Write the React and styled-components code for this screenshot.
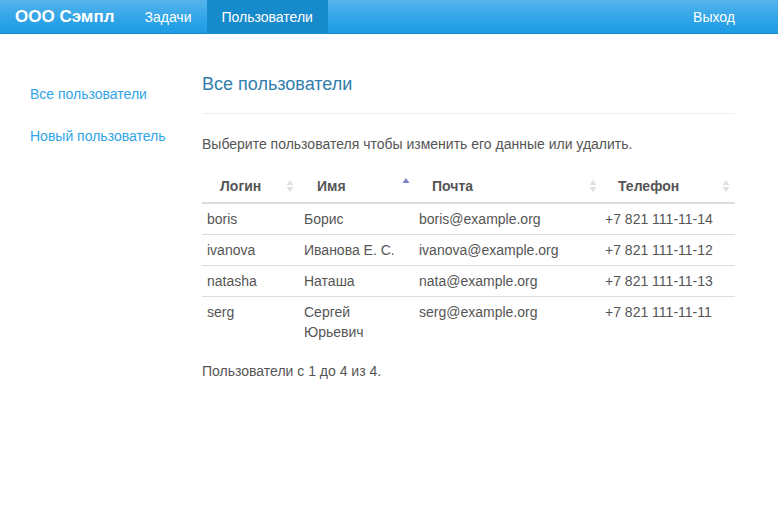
import React from "react";
import styled, { createGlobalStyle } from "styled-components";

const Global = createGlobalStyle`
  html, body { margin: 0; padding: 0; background: #fff; }
  body {
    font-family: "Liberation Sans", Arial, sans-serif;
    font-size: 14px;
    line-height: 20px;
    color: #555555;
  }
  * { box-sizing: border-box; }
`;

const Navbar = styled.nav`
  height: 34px;
  display: flex;
  align-items: stretch;
  background-image: linear-gradient(#54b4eb, #2fa4e7 60%, #1d9ce5);
  border-bottom: 1px solid #178acc;
  padding: 0 28px 0 0;
`;

const Brand = styled.a`
  display: flex;
  align-items: center;
  padding: 0 15px;
  font-size: 17px;
  font-weight: bold;
  color: #fff;
  text-decoration: none;
`;

const NavItem = styled.a`
  display: flex;
  align-items: center;
  padding: 0 15px;
  color: #fff;
  text-decoration: none;
  font-size: 14px;
  background: ${(p) => (p.$active ? "#178acc" : "transparent")};
`;

const Spacer = styled.div`
  flex: 1;
`;

const Body = styled.div`
  display: flex;
  align-items: flex-start;
  padding: 0 43px 0 15px;
`;

const Sidebar = styled.ul`
  list-style: none;
  margin: 40px 0 0;
  padding: 0;
  width: 187px;
  display: flex;
  flex-direction: column;
  gap: 2px;
`;

const SideLink = styled.a`
  display: block;
  padding: 10px 15px;
  color: #2fa4e7;
  text-decoration: none;
  white-space: nowrap;
`;

const Main = styled.main`
  flex: 1;
  padding-top: 40px;
`;

const Heading = styled.h3`
  margin: 0;
  font-size: 18px;
  font-weight: normal;
  line-height: 20px;
  color: #317eac;
  padding-bottom: 19px;
  border-bottom: 1px solid #eeeeee;
`;

const Lead = styled.p`
  margin: 20px 0 17px;
`;

const Table = styled.table`
  width: 100%;
  border-collapse: collapse;
`;

const Th = styled.th`
  position: relative;
  text-align: left;
  font-weight: bold;
  padding: 5px 18px 6px;
  border-bottom: 2px solid #dddddd;
  width: ${(p) => p.$w}px;
  white-space: nowrap;
`;

const SortIcon = styled.svg`
  position: absolute;
  right: ${(p) => p.$right}px;
  top: ${(p) => p.$top}px;
`;

const Td = styled.td`
  padding: 5px;
  vertical-align: top;
  border-top: ${(p) => (p.$first ? "none" : "1px solid #dddddd")};
`;

const Info = styled.div`
  margin-top: 14px;
`;

const Both = ({ right }) => (
  <SortIcon $right={right} $top={8} width="8" height="14" viewBox="0 0 8 14">
    <path d="M4 1 L7.5 6 L0.5 6 Z" fill="#e0e0e0" />
    <path d="M4 13 L7.5 8 L0.5 8 Z" fill="#e0e0e0" />
  </SortIcon>
);

const Asc = ({ right }) => (
  <SortIcon $right={right} $top={6} width="8" height="8" viewBox="0 0 8 8">
    <path d="M4 1 L7.5 6 L0.5 6 Z" fill="#7b7fc8" />
  </SortIcon>
);

const users = [
  ["boris", "Борис", "boris@example.org", "+7 821 111-11-14"],
  ["ivanova", "Иванова Е. С.", "ivanova@example.org", "+7 821 111-11-12"],
  ["natasha", "Наташа", "nata@example.org", "+7 821 111-11-13"],
  ["serg", "Сергей Юрьевич", "serg@example.org", "+7 821 111-11-11"],
];

export default function App() {
  return (
    <>
      <Global />
      <Navbar>
        <Brand href="#">ООО Сэмпл</Brand>
        <NavItem href="#">Задачи</NavItem>
        <NavItem href="#" $active>
          Пользователи
        </NavItem>
        <Spacer />
        <NavItem href="#">Выход</NavItem>
      </Navbar>
      <Body>
        <Sidebar>
          <li>
            <SideLink href="#">Все пользователи</SideLink>
          </li>
          <li>
            <SideLink href="#">Новый пользователь</SideLink>
          </li>
        </Sidebar>
        <Main>
          <Heading>Все пользователи</Heading>
          <Lead>Выберите пользователя чтобы изменить его данные или удалить.</Lead>
          <Table>
            <thead>
              <tr>
                <Th $w={97}>
                  Логин
                  <Both right={5} />
                </Th>
                <Th $w={115}>
                  Имя
                  <Asc right={4} />
                </Th>
                <Th $w={186}>
                  Почта
                  <Both right={3} />
                </Th>
                <Th>
                  Телефон
                  <Both right={5} />
                </Th>
              </tr>
            </thead>
            <tbody>
              {users.map((u, i) => (
                <tr key={u[0]}>
                  {u.map((c, j) => (
                    <Td key={j} $first={i === 0}>
                      {c}
                    </Td>
                  ))}
                </tr>
              ))}
            </tbody>
          </Table>
          <Info>Пользователи с 1 до 4 из 4.</Info>
        </Main>
      </Body>
    </>
  );
}
